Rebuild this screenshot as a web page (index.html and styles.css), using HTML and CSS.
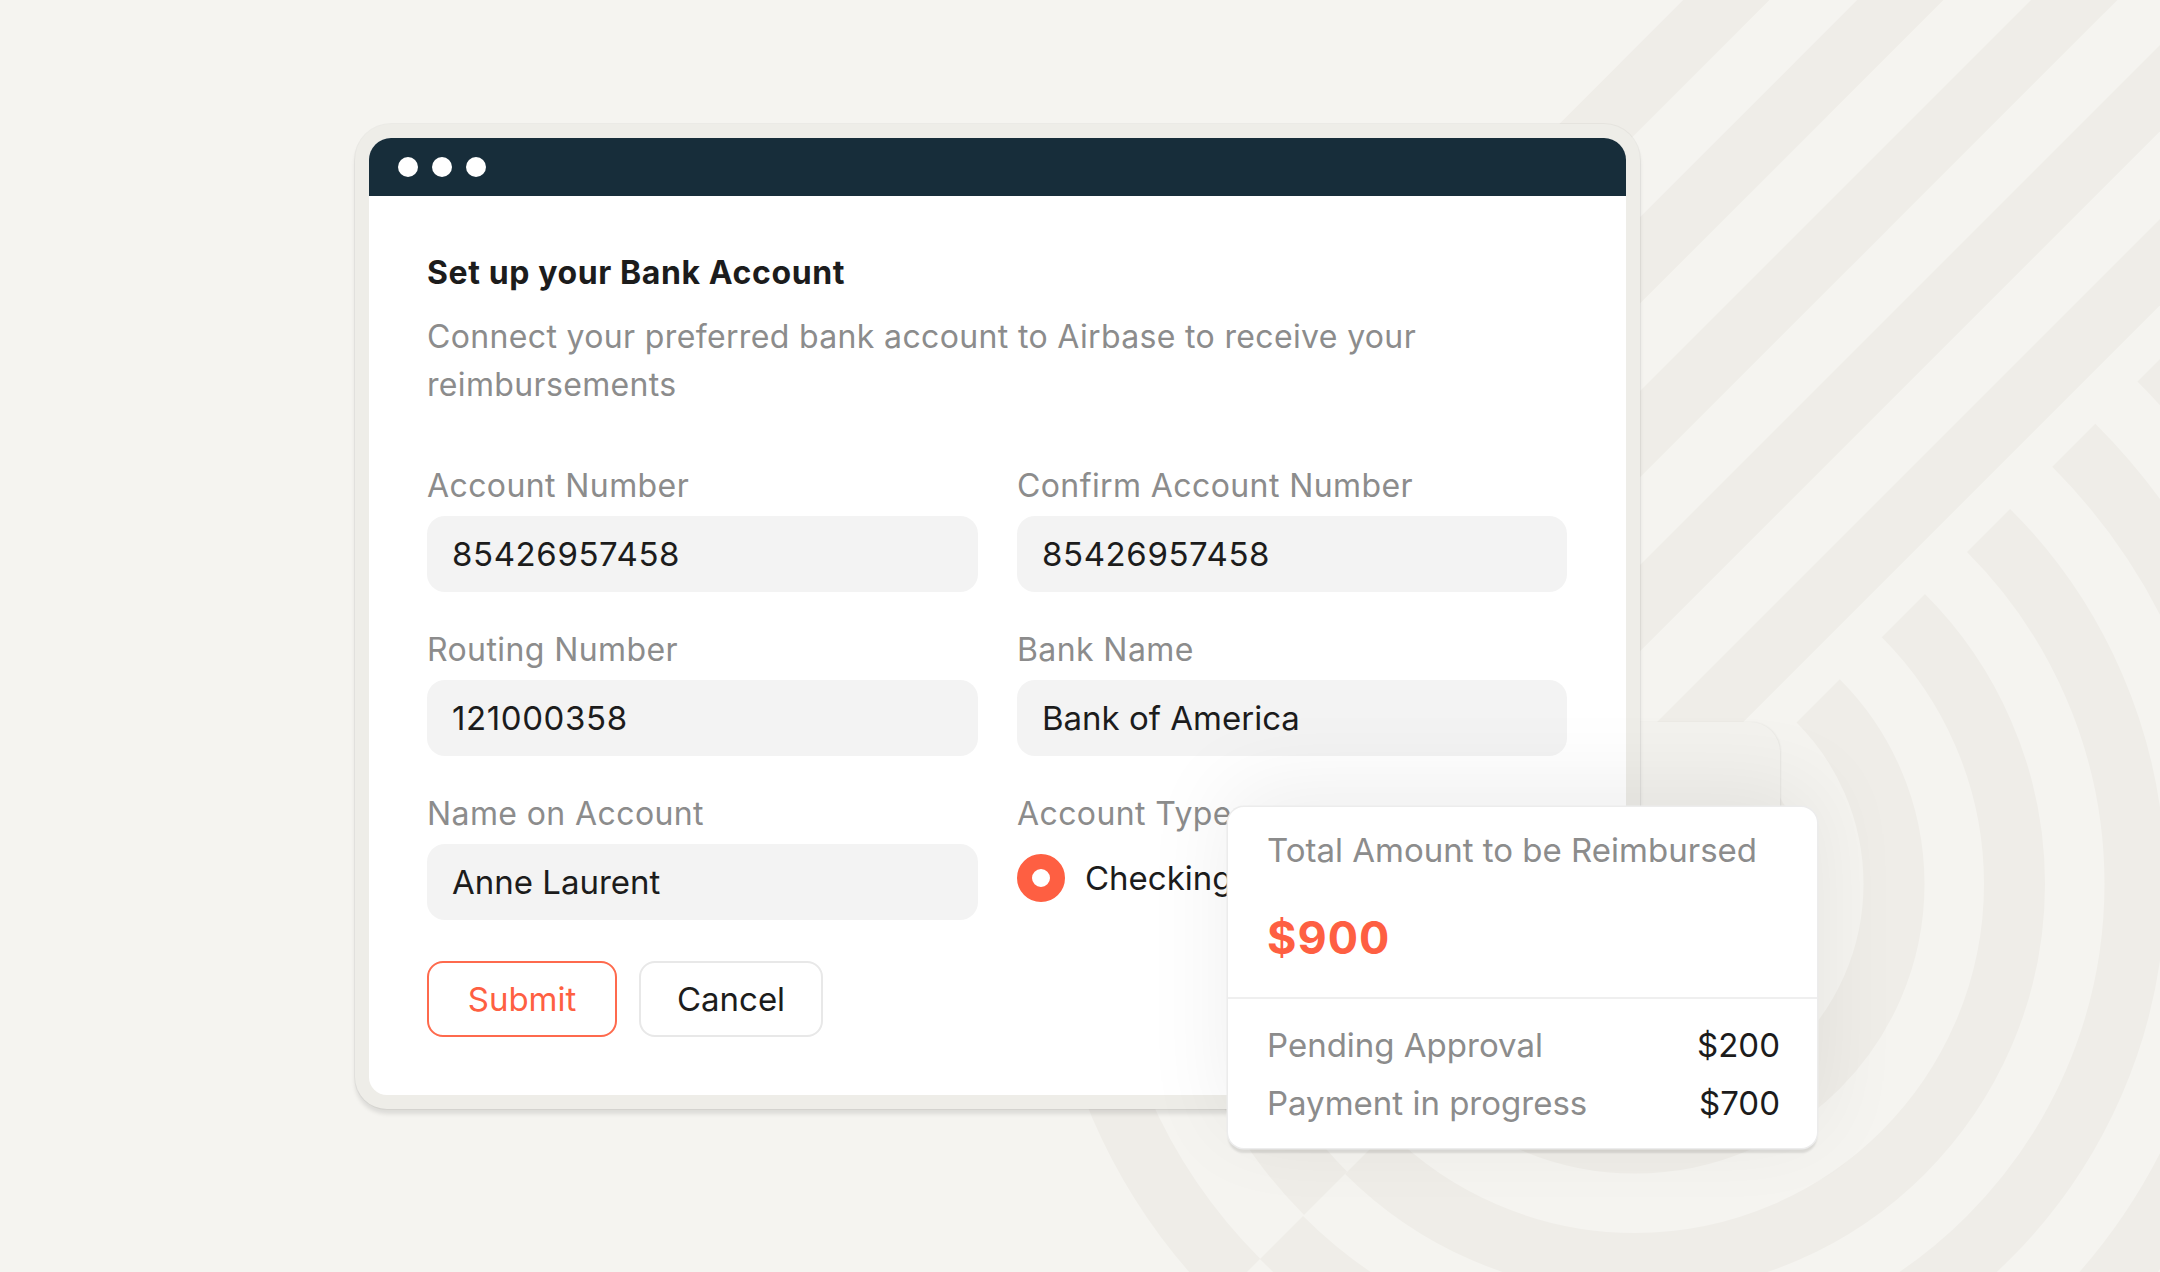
FILE: index.html
```html
<!DOCTYPE html>
<html lang="en">
<head>
<meta charset="utf-8">
<title>Set up your Bank Account</title>
<link rel="stylesheet" href="styles.css">
</head>
<body>
<svg class="bg-pattern" width="2160" height="1272" viewBox="0 0 2160 1272" aria-hidden="true">
  <defs>
    <clipPath id="half-pos"><rect x="-3000" y="0" width="6000" height="3000"/></clipPath>
    <clipPath id="q-right"><rect x="0" y="-3000" width="3000" height="3000"/></clipPath>
    <clipPath id="q-left"><rect x="-3000" y="-3000" width="3000" height="3000"/></clipPath>
  </defs>
  <g transform="translate(1635 884) rotate(-45)">
    <g clip-path="url(#half-pos)" fill="none" stroke="#efede8" stroke-width="61">
      <circle r="138.5"/><circle r="259"/><circle r="379.5"/><circle r="500"/>
      <circle r="620.5"/><circle r="741"/><circle r="861.5"/><circle r="982"/>
    </g>
    <g clip-path="url(#q-right)" fill="#efede8">
      <rect x="0" y="-99" width="3000" height="61"/>
      <rect x="0" y="-222" width="3000" height="61"/>
      <rect x="0" y="-345" width="3000" height="61"/>
      <rect x="0" y="-468" width="3000" height="61"/>
      <rect x="0" y="-591" width="3000" height="61"/>
    </g>
    <g clip-path="url(#q-left)" fill="none" stroke="#efede8" stroke-width="61">
      <circle r="68.5"/><circle r="191.5"/><circle r="314.5"/><circle r="437.5"/><circle r="560.5"/>
    </g>
  </g>
</svg>

<main class="stage">
  <section class="window">
    <header class="titlebar">
      <span class="dot"></span><span class="dot"></span><span class="dot"></span>
    </header>
    <div class="window-body">
      <h1 class="title">Set up your Bank Account</h1>
      <p class="subtitle">Connect your preferred bank account to Airbase to receive your reimbursements</p>

      <div class="form-grid">
        <div class="field">
          <label class="label">Account Number</label>
          <div class="input input-num">85426957458</div>
        </div>
        <div class="field">
          <label class="label">Confirm Account Number</label>
          <div class="input input-num">85426957458</div>
        </div>
        <div class="field">
          <label class="label">Routing Number</label>
          <div class="input input-num">121000358</div>
        </div>
        <div class="field">
          <label class="label">Bank Name</label>
          <div class="input">Bank of America</div>
        </div>
        <div class="field">
          <label class="label">Name on Account</label>
          <div class="input">Anne Laurent</div>
        </div>
        <div class="field">
          <label class="label">Account Type</label>
          <div class="radio-row">
            <span class="radio"></span>
            <span class="radio-text">Checking</span>
          </div>
        </div>
      </div>

      <div class="actions">
        <button class="btn btn-primary">Submit</button>
        <button class="btn btn-secondary">Cancel</button>
      </div>
    </div>
  </section>

  <aside class="summary-card">
    <div class="summary-top">
      <div class="summary-label">Total Amount to be Reimbursed</div>
      <div class="summary-amount">$900</div>
    </div>
    <div class="summary-rows">
      <div class="summary-row"><span class="k">Pending Approval</span><span class="v">$200</span></div>
      <div class="summary-row"><span class="k">Payment in progress</span><span class="v">$700</span></div>
    </div>
  </aside>
</main>
</body>
</html>
```

FILE: styles.css
```css
html {
  background: #f5f4f0;
}

body {
  margin: 0;
  font-family: Inter, "Noto Sans", "Liberation Sans", sans-serif;
  color: #1c1c1c;
}

.bg-pattern {
  position: absolute;
  top: 0;
  left: 0;
  z-index: -1;
}

.stage {
  position: relative;
  width: 2160px;
  height: 1272px;
  overflow: hidden;
}

/* ---------- window ---------- */
.window {
  width: 1257px;
  margin: 138px 0 0 369px;
  background: #ffffff;
  border-radius: 22px 22px 18px 18px;
  box-shadow:
    0 0 0 14px #eeede8,
    0 0 0 15px rgba(0, 0, 0, 0.04),
    0 5px 4px 14px rgba(0, 0, 0, 0.10);
}

.titlebar {
  height: 58px;
  background: #172d3a;
  border-radius: 22px 22px 0 0;
  display: flex;
  align-items: center;
  gap: 14px;
  padding-left: 29px;
}

.dot {
  width: 20px;
  height: 20px;
  border-radius: 50%;
  background: #ffffff;
}

.window-body {
  padding: 57px 59px 58px 58px;
}

.title {
  margin: 0;
  font-size: 32px;
  line-height: 40px;
  font-weight: 700;
  letter-spacing: 0.6px;
  color: #1c1c1c;
}

.subtitle {
  margin: 20px 0 0;
  font-size: 32px;
  line-height: 48px;
  letter-spacing: 0.35px;
  color: #8c8c8c;
}

.form-grid {
  margin-top: 57px;
  display: grid;
  grid-template-columns: 551px 550px;
  column-gap: 39px;
  row-gap: 38px;
}

.label {
  display: block;
  font-size: 32px;
  line-height: 40px;
  letter-spacing: 0.4px;
  color: #8c8c8c;
  margin-bottom: 10px;
}

.input {
  height: 76px;
  box-sizing: border-box;
  background: #f3f3f3;
  border-radius: 18px;
  padding-left: 25px;
  display: flex;
  align-items: center;
  font-size: 33px;
  color: #1c1c1c;
}

.input-num {
  letter-spacing: 0.6px;
}

.radio-row {
  height: 68px;
  display: flex;
  align-items: center;
  gap: 20px;
  font-size: 33px;
  color: #1c1c1c;
}

.radio {
  width: 48px;
  height: 48px;
  box-sizing: border-box;
  border-radius: 50%;
  border: 15.5px solid #fe5f42;
  background: #ffffff;
  flex: none;
}

.actions {
  margin-top: 41px;
  display: flex;
  gap: 22px;
}

.btn {
  height: 76px;
  box-sizing: border-box;
  border-radius: 16px;
  background: #ffffff;
  font-family: inherit;
  font-size: 33px;
  padding: 0;
  border: 2px solid;
  cursor: pointer;
}

.btn-primary {
  border-color: #fe6a4d;
  color: #fe5f42;
  width: 190px;
}

.btn-secondary {
  border-color: #e8e8e8;
  color: #1c1c1c;
  width: 184px;
}

/* ---------- summary card (overlay) ---------- */
.summary-card {
  position: absolute;
  left: 1228px;
  top: 807px;
  width: 589px;
  background: #ffffff;
  border-radius: 16px;
  box-shadow:
    0 0 0 1.5px #ececec,
    0 5px 2px rgba(0, 0, 0, 0.10),
    0 -20px 90px rgba(0, 0, 0, 0.07);
}

/* soft backdrop plate peeking out above the card */
.summary-card::before {
  content: "";
  position: absolute;
  top: -85px;
  left: -160px;
  right: 37px;
  height: 200px;
  border-radius: 30px;
  background: #f3f2ee;
  box-shadow: 1px 0 2px rgba(0, 0, 0, 0.06);
  z-index: -1;
}

.summary-top {
  padding: 23px 38px 34px 39px;
  border-bottom: 2px solid #efefef;
}

.summary-label {
  font-size: 33px;
  line-height: 40px;
  color: #8c8c8c;
}

.summary-amount {
  margin-top: 43px;
  font-size: 45px;
  line-height: 50px;
  font-weight: 700;
  letter-spacing: 1px;
  color: #fe5f42;
}

.summary-rows {
  padding: 17px 37px 16px 39px;
}

.summary-row {
  display: flex;
  justify-content: space-between;
  font-size: 33px;
  line-height: 58px;
}

.summary-row .k {
  color: #8c8c8c;
}

.summary-row .v {
  color: #1c1c1c;
}
```
